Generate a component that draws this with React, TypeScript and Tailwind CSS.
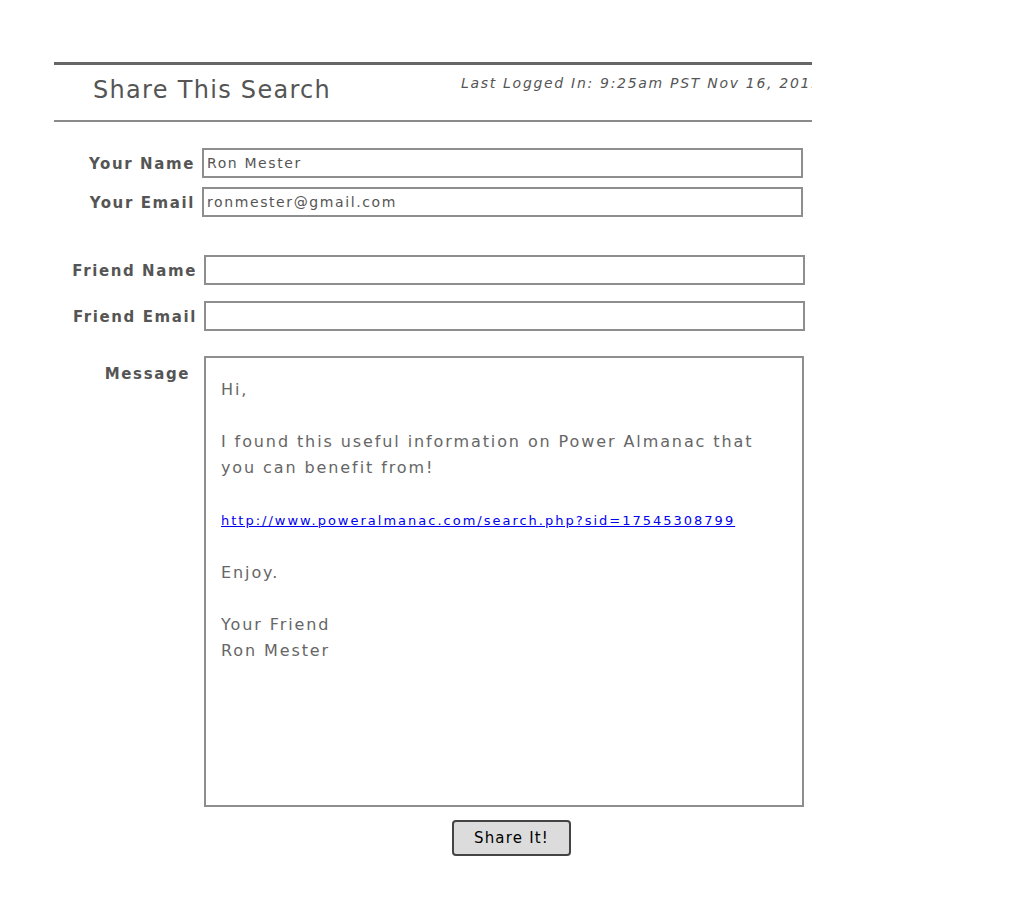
const Field = ({ label, value, labelW, top }: { label: string; value?: string; labelW: string; top: string }) => {
	return (
		<div className={`flex items-center ${top}`}>
			<label className={`${labelW} shrink-0 pr-[7px] pt-[2px] text-right text-[15px] font-bold tracking-[1.6px] text-[#555]`}>{label}</label>
			<input
				type="text"
				defaultValue={value}
				className="w-[601px] h-[30px] border-2 border-[#8e8e8e] bg-white px-[3px] text-[14px] tracking-[1.6px] text-[#555] focus:outline-0"
			/>
		</div>
	);
};

const App = () => {
	return (
		<div className="w-[1010px] min-h-[908px] bg-white pt-[62px] font-['DejaVu_Sans',Verdana,sans-serif]">
			<div className="ml-[54px] w-[758px]">
				<div className="h-[60px] border-t-[3px] border-b-2 border-t-[#666] border-b-[#8a8a8a] flex items-start overflow-hidden whitespace-nowrap">
					<h1 className="pl-[39px] pt-[7px] text-[24px] tracking-[1.3px] text-[#555] w-[407px] shrink-0">Share This Search</h1>
					<p className="pt-[8px] text-[14px] italic tracking-[1.7px] text-[#555]">Last Logged In: 9:25am PST Nov 16, 2011</p>
				</div>

				<Field label="Your Name" value="Ron Mester" labelW="w-[148px]" top="mt-[26px]" />
				<Field label="Your Email" value="ronmester@gmail.com" labelW="w-[148px]" top="mt-[9px]" />
				<Field label="Friend Name" labelW="w-[150px]" top="mt-[38px]" />
				<Field label="Friend Email" labelW="w-[150px]" top="mt-[16px]" />

				<div className="flex items-start mt-[25px]">
					<label className="w-[150px] shrink-0 pr-[14px] pt-[7px] text-right text-[15px] font-bold tracking-[1.6px] text-[#555]">Message</label>
					<div className="w-[600px] h-[451px] border-2 border-[#8e8e8e] px-[15px] pt-[19px] text-[16px] leading-[26px] tracking-[1.9px] text-[#666]">
						<p>Hi,</p>
						<p className="mt-[26px]">
							I found this useful information on Power Almanac that
							<br />
							you can benefit from!
						</p>
						<p className="mt-[26px]">
							<a href="#" className="text-[13px] tracking-[2px] text-[#0000ee] underline">
								http://www.poweralmanac.com/search.php?sid=17545308799
							</a>
						</p>
						<p className="mt-[26px]">Enjoy.</p>
						<p className="mt-[26px]">
							Your Friend
							<br />
							Ron Mester
						</p>
					</div>
				</div>

				<button className="ml-[398px] mt-[13px] w-[119px] h-[36px] rounded-[4px] border-2 border-[#444] bg-[#dcdcdc] text-[15px] tracking-[1.2px] text-black">
					Share It!
				</button>
			</div>
		</div>
	);
};

export default App;
